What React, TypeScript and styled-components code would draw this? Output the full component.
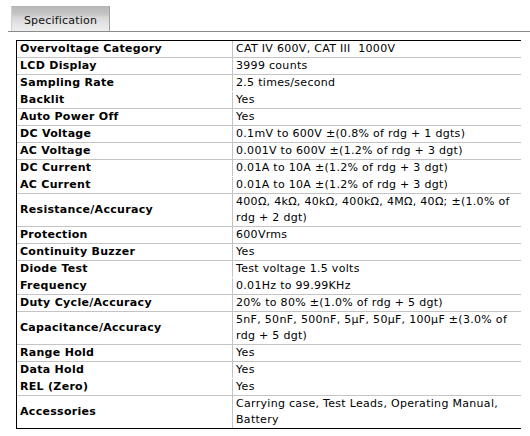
import React from 'react';
import styled, { createGlobalStyle } from 'styled-components';

const GlobalStyle = createGlobalStyle`
    html, body {
        margin: 0;
        padding: 0;
        background: #ffffff;
    }

    body {
        font-family: 'DejaVu Sans', Verdana, sans-serif;
        font-size: 11px;
        color: #000000;
    }
`;

const Page = styled.div`
    padding: 6px 0 0 8px;
`;

const TabBar = styled.div`
    display: flex;
    padding-left: 3px;
    border-bottom: 1px solid #8a8a8a;
`;

const Tab = styled.div`
    width: 99px;
    height: 25px;
    display: flex;
    align-items: center;
    justify-content: center;
    box-sizing: border-box;
    border: 1px solid #b4b4b4;
    border-left-color: #d0d0d0;
    border-right-color: #a0a0a0;
    border-bottom: none;
    background: linear-gradient(
        to bottom,
        #b9b9b9 0%,
        #c4c4c4 28%,
        #d8d8d8 45%,
        #e3e3e3 70%,
        #eeeeee 100%
    );
    font-size: 11px;
    letter-spacing: 0.2px;
    color: #111111;
    padding-top: 2px;
`;

const SpecTable = styled.div`
    margin: 8px 0 0 8px;
    width: 505px;
    box-sizing: border-box;
    border-top: 1px solid #000000;
    border-left: 1px solid #000000;
    border-bottom: 1px solid #000000;
`;

const Row = styled.div<{ $noLine?: boolean }>`
    display: grid;
    grid-template-columns: 216px 1fr;
    border-bottom: 1px solid ${(p) => (p.$noLine ? 'transparent' : '#c4c4c4')};

    &:last-child {
        border-bottom: none;
    }
`;

const Label = styled.div`
    display: flex;
    align-items: center;
    padding-left: 3px;
    border-right: 1px solid #c4c4c4;
    font-weight: bold;
    letter-spacing: 0.3px;
    line-height: 15.8px;
`;

const Value = styled.div`
    padding: 0 4px 0 3px;
    letter-spacing: 0.3px;
    line-height: 16px;
    white-space: nowrap;
`;

interface Spec {
    label: string;
    value: React.ReactNode;
    noLine?: boolean;
}

const specs: Spec[] = [
    { label: 'Overvoltage Category', value: 'CAT IV 600V, CAT III\u00a0 1000V' },
    { label: 'LCD Display', value: '3999 counts' },
    { label: 'Sampling Rate', value: '2.5 times/second', noLine: true },
    { label: 'Backlit', value: 'Yes' },
    { label: 'Auto Power Off', value: 'Yes' },
    { label: 'DC Voltage', value: '0.1mV to 600V ±(0.8% of rdg + 1 dgts)' },
    { label: 'AC Voltage', value: '0.001V to 600V ±(1.2% of rdg + 3 dgt)' },
    { label: 'DC Current', value: '0.01A to 10A ±(1.2% of rdg + 3 dgt)', noLine: true },
    { label: 'AC Current', value: '0.01A to 10A ±(1.2% of rdg + 3 dgt)' },
    {
        label: 'Resistance/Accuracy',
        value: (
            <>
                400Ω, 4kΩ, 40kΩ, 400kΩ, 4MΩ, 40Ω; ±(1.0% of
                <br />
                rdg + 2 dgt)
            </>
        ),
    },
    { label: 'Protection', value: '600Vrms' },
    { label: 'Continuity Buzzer', value: 'Yes' },
    { label: 'Diode Test', value: 'Test voltage 1.5 volts', noLine: true },
    { label: 'Frequency', value: '0.01Hz to 99.99KHz' },
    { label: 'Duty Cycle/Accuracy', value: '20% to 80% ±(1.0% of rdg + 5 dgt)' },
    {
        label: 'Capacitance/Accuracy',
        value: (
            <>
                5nF, 50nF, 500nF, 5µF, 50µF, 100µF ±(3.0% of
                <br />
                rdg + 5 dgt)
            </>
        ),
    },
    { label: 'Range Hold', value: 'Yes' },
    { label: 'Data Hold', value: 'Yes', noLine: true },
    { label: 'REL (Zero)', value: 'Yes' },
    {
        label: 'Accessories',
        value: (
            <>
                Carrying case, Test Leads, Operating Manual,
                <br />
                Battery
            </>
        ),
    },
];

const App = (): React.ReactElement => {
    return (
        <Page>
            <GlobalStyle />
            <TabBar>
                <Tab>Specification</Tab>
            </TabBar>
            <SpecTable>
                {specs.map((spec) => (
                    <Row key={spec.label} $noLine={spec.noLine}>
                        <Label>{spec.label}</Label>
                        <Value>{spec.value}</Value>
                    </Row>
                ))}
            </SpecTable>
        </Page>
    );
};

export default App;
